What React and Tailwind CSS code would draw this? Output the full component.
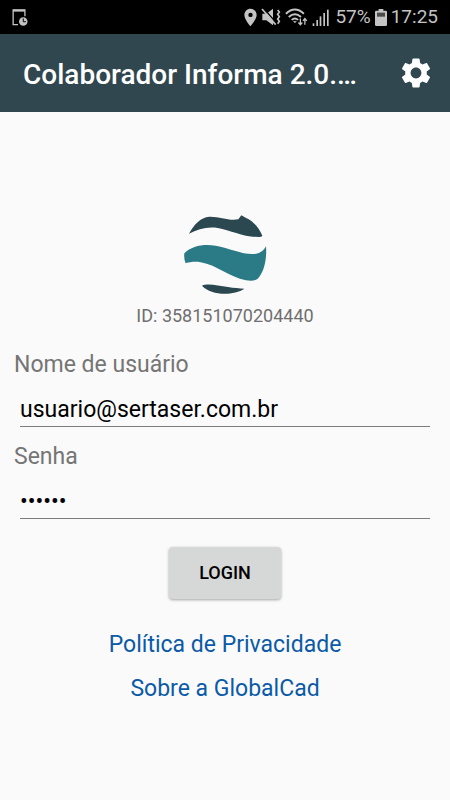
import { useState } from "react";
import { MdLocationOn, MdSettings } from "react-icons/md";

function StatusBar() {
  return (
    <div className="flex h-[34px] items-center bg-black px-3 text-[#c4c4c4]">
      <svg viewBox="0 0 48 52" className="h-[17px] w-4" fill="none">
        <path d="M39 22V3H3v45h15" stroke="currentColor" strokeWidth="4" />
        <path d="M3 5h36" stroke="currentColor" strokeWidth="6" />
        <circle cx="34" cy="38" r="13" fill="currentColor" />
        <path d="M34 29v10h8" stroke="#000" strokeWidth="3" />
      </svg>

      <div className="ml-auto flex items-center">
        <MdLocationOn className="h-[21px] w-[21px]" />

        {/* Muted / vibrate */}
        <svg viewBox="0 0 60 54" className="mr-[2px] h-[18px] w-5" fill="none">
          <path d="M4 17h12L36 2v50L16 37H4z" fill="currentColor" />
          <path d="M8 1l38 44" stroke="#000" strokeWidth="4" />
          <path d="M3 3l41 47" stroke="currentColor" strokeWidth="5" />
          <path d="M50 6l5 6-5 7 5 7-5 7 5 7-5 7" stroke="currentColor" strokeWidth="5" />
        </svg>

        {/* Wifi */}
        <svg viewBox="0 0 70 56" className="ml-[2px] h-[18px] w-[23px]" fill="none" stroke="currentColor">
          <path d="M2 18Q30-8 58 18" strokeWidth="6" />
          <path d="M11 28Q30 11 49 28" strokeWidth="6" />
          <path d="M20 37Q30 28 40 37" strokeWidth="6" />
          <path d="M25 41L30 47L35 41Z" fill="currentColor" />
          <path d="M47 33v18M41 45l6 7 6-7" strokeWidth="4" />
          <path d="M61 52V34M55 40l6-7 6 7" strokeWidth="4" />
        </svg>

        {/* Signal */}
        <svg viewBox="0 0 51 51" className="ml-1 h-[17px] w-[17px]" fill="currentColor">
          <rect x="2" y="43" width="5" height="8" />
          <rect x="13" y="33" width="5" height="18" />
          <rect x="23" y="22" width="5" height="29" />
          <rect x="34" y="12" width="5" height="39" />
          <rect x="45" y="2" width="5" height="49" />
        </svg>

        <span className="ml-[6px] text-[19px] leading-6">57%</span>

        <svg viewBox="0 0 36 51" className="ml-1 h-[17px] w-3">
          <path d="M11 0h14v5h7q4 0 4 4v38q0 4-4 4H4q-4 0-4-4V9q0-4 4-4h7z" fill="currentColor" />
          <rect x="6" y="11" width="24" height="12" fill="#4a4a4a" />
        </svg>

        <span className="ml-1 text-[19px] leading-6">17:25</span>
      </div>
    </div>
  );
}

function Logo() {
  return (
    <svg viewBox="42 30 249 240" className="h-20 w-[83px]" role="img" aria-label="GlobalCad">
      <path
        d="M57 86C72 59 91 37 118 35C150 34 174 48 205 43L214 31L227 38C252 49 267 69 277 92Q275 97 264 96C220 96 182 76 143 69C111 64 83 73 57 86Z"
        fill="#2b4750"
      />
      <path
        d="M43 145C65 122 102 116 137 122C178 129 218 149 251 147C269 146 282 137 288 123C291 160 283 198 266 218C257 228 244 229 228 226C178 216 142 181 92 172C75 169 60 171 47 175Q41 161 43 145Z"
        fill="#2a7b86"
      />
      <path d="M96 242C113 234 145 242 174 246C192 249 208 250 223 251C191 272 124 273 96 242Z" fill="#2b4750" />
    </svg>
  );
}

export default function App() {
  const [username, setUsername] = useState("usuario@sertaser.com.br");
  const [password, setPassword] = useState("123456");

  return (
    <div className="flex min-h-screen flex-col bg-[#fafafa] font-[Roboto,sans-serif]">
      <StatusBar />

      {/* Header */}
      <header className="flex h-[78px] items-center justify-between bg-[#30474f] pr-4 pl-[23px] text-white">
        <h1 className="truncate pt-1 text-[28px] font-medium">Colaborador Informa 2.0.…</h1>
        <button type="button" aria-label="Configurações" className="shrink-0">
          <MdSettings className="h-9 w-9" />
        </button>
      </header>

      <form onSubmit={(e) => e.preventDefault()} className="flex flex-col items-center pt-[103px]">
        <Logo />
        <p className="mt-2 text-lg leading-[26px] text-[#6f6f6f]">ID: 358151070204440</p>

        <div className="mt-5 w-full pr-5 pl-[14px]">
          <label htmlFor="username" className="block text-[23px] leading-8 text-[#757575]">
            Nome de usuário
          </label>
          <div className="pt-[6px] pl-[6px]">
            <input
              id="username"
              type="text"
              value={username}
              onChange={(e) => setUsername(e.target.value)}
              className="block h-10 w-full border-b border-[#7c7c7c] pt-[6px] text-[23px] text-black outline-none"
            />
          </div>
        </div>

        <div className="mt-[14px] w-full pr-5 pl-[14px]">
          <label htmlFor="password" className="block text-[23px] leading-8 text-[#757575]">
            Senha
          </label>
          <div className="pt-[6px] pl-[6px]">
            <input
              id="password"
              type="password"
              value={password}
              onChange={(e) => setPassword(e.target.value)}
              className="block h-10 w-full border-b border-[#7c7c7c] pt-[6px] text-[23px] text-black outline-none"
            />
          </div>
        </div>

        <button
          type="submit"
          className="mt-7 h-[52px] w-28 rounded-sm bg-[#d6d7d7] text-lg font-medium text-black shadow-[0_1px_3px_rgba(0,0,0,0.35)]"
        >
          LOGIN
        </button>

        <div className="mt-[30px] flex flex-col items-center gap-3 text-[23px] leading-8 text-[#0a5aa8]">
          <a href="#privacidade">Política de Privacidade</a>
          <a href="#sobre">Sobre a GlobalCad</a>
        </div>
      </form>
    </div>
  );
}
